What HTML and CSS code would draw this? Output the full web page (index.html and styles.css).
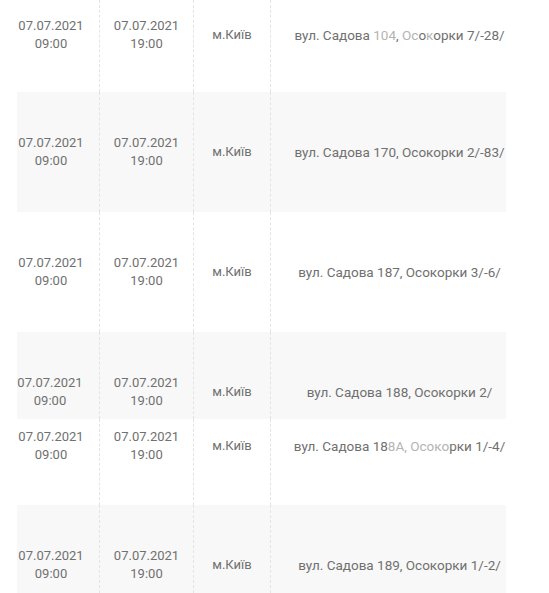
FILE: index.html
```html
<!DOCTYPE html>
<html lang="uk">
<head>
<meta charset="utf-8">
<link rel="stylesheet" href="styles.css">
</head>
<body>
<div class="table">
  <div class="row r1">
    <div class="cell c1">07.07.2021<br>09:00</div>
    <div class="cell c2">07.07.2021<br>19:00</div>
    <div class="cell c3">м.Київ</div>
    <div class="cell c4">вул. Садова <span class="faint">104</span>, <span class="faint">Ос</span>о<span class="faint">к</span>орки 7/-28/</div>
  </div>
  <div class="row r2 shade">
    <div class="cell c1">07.07.2021<br>09:00</div>
    <div class="cell c2">07.07.2021<br>19:00</div>
    <div class="cell c3">м.Київ</div>
    <div class="cell c4">вул. Садова 170, Осокорки 2/-83/</div>
  </div>
  <div class="row r3">
    <div class="cell c1">07.07.2021<br>09:00</div>
    <div class="cell c2">07.07.2021<br>19:00</div>
    <div class="cell c3">м.Київ</div>
    <div class="cell c4">вул. Садова 187, Осокорки 3/-6/</div>
  </div>
  <div class="row r4 shade">
    <div class="cell c1 tight">07.07.2021<br>09:00</div>
    <div class="cell c2">07.07.2021<br>19:00</div>
    <div class="cell c3">м.Київ</div>
    <div class="cell c4">вул. Садова 188, Осокорки 2/</div>
  </div>
  <div class="row r5">
    <div class="cell c1">07.07.2021<br>09:00</div>
    <div class="cell c2">07.07.2021<br>19:00</div>
    <div class="cell c3">м.Київ</div>
    <div class="cell c4">вул. Садова 18<span class="faint">8А, Осоко</span>рки 1/-4/</div>
  </div>
  <div class="row r6 shade">
    <div class="cell c1">07.07.2021<br>09:00</div>
    <div class="cell c2">07.07.2021<br>19:00</div>
    <div class="cell c3">м.Київ</div>
    <div class="cell c4">вул. Садова 189, Осокорки 1/-2/</div>
  </div>
</div>
</body>
</html>
```
FILE: styles.css
```css
html, body {
  margin: 0;
  padding: 0;
  background: #ffffff;
}
body {
  font-family: Roboto, "Liberation Sans", Arial, sans-serif;
  font-size: 13px;
  line-height: 18px;
  color: #707070;
}
.table {
  margin-left: 17px;
  width: 489px;
  display: flex;
  flex-direction: column;
}
.row {
  --pad: 42px;
  display: grid;
  grid-template-columns: 82px 94px 77px 236px;
  align-items: stretch;
}
.shade {
  background: #f8f8f8;
}
.r1 { height: 92px; --pad: 17px; }
.r2 { height: 120px; --pad: 42px; }
.r3 { height: 120px; --pad: 42px; }
.r4 { height: 87px; --pad: 42px; }
.r5 { height: 86px; --pad: 9px; }
.r6 { height: 88px; --pad: 42px; }
.cell {
  box-sizing: border-box;
  text-align: center;
  white-space: nowrap;
  padding-top: var(--pad);
}
.c1 {
  padding-right: 14px;
}
.c1.tight {
  padding-right: 16px;
}
.c2, .c3, .c4 {
  border-left: 1px dashed #e4e4e4;
}
.c3 {
  padding-top: calc(var(--pad) + 9px);
}
.c4 {
  padding-top: calc(var(--pad) + 9px);
  padding-left: 22px;
  font-size: 13.5px;
}
.faint {
  color: #b4b4b4;
}
```
